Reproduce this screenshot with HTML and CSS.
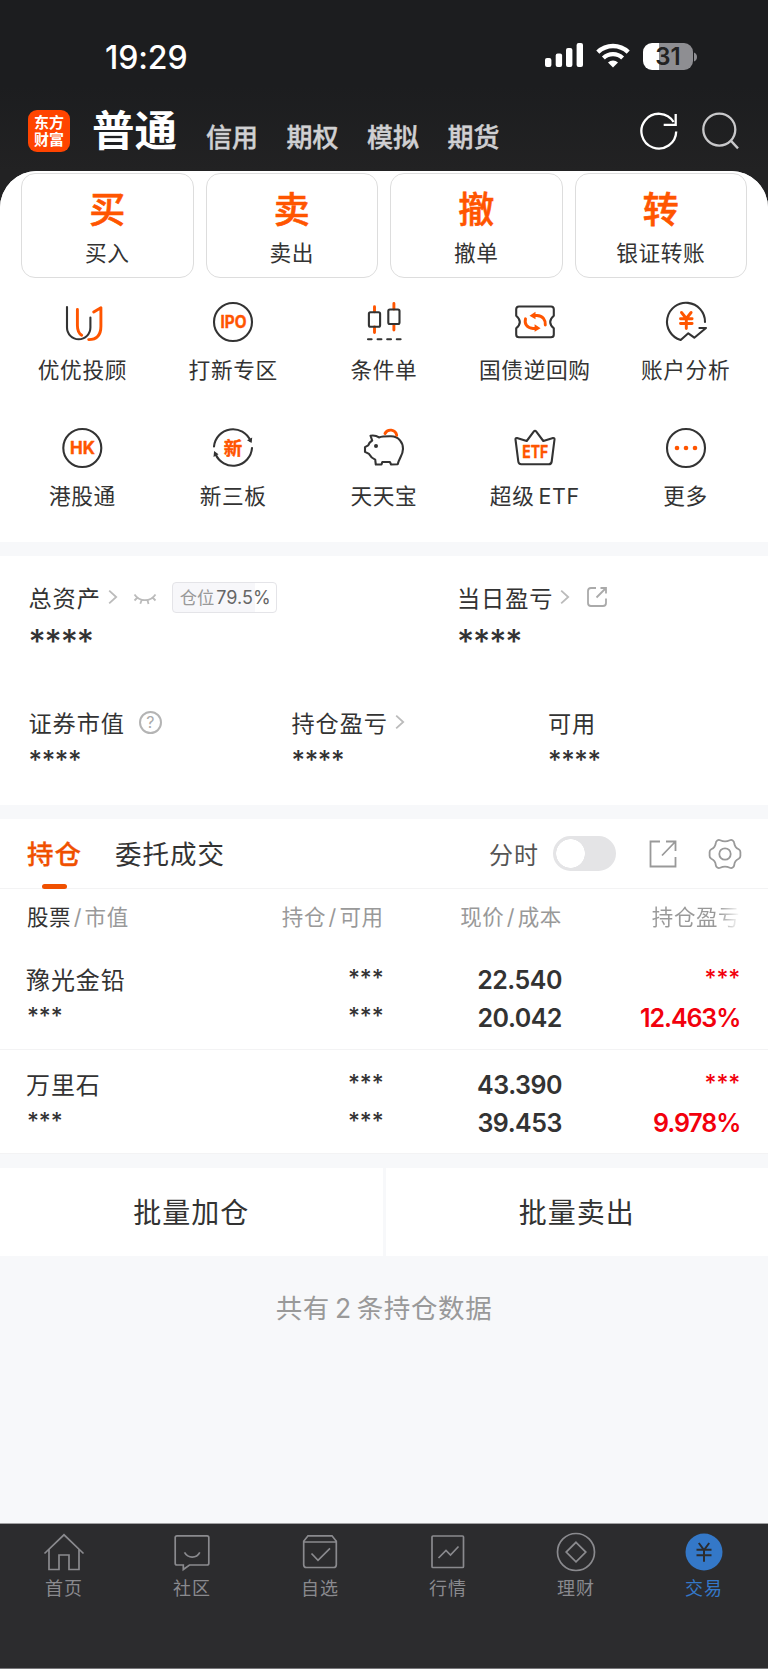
FILE: index.html
```html
<!DOCTYPE html>
<html lang="zh-CN">
<head>
    <meta charset="UTF-8">
    <meta name="viewport" content="width=device-width, initial-scale=1.0">
    <title>交易</title>
    <link rel="stylesheet" href="styles.css">
</head>
<body>
    <header class="header">
        <div class="status-bar">
            <span class="time">19:29</span>
            <div class="status-icons">
                <svg class="signal" width="39" height="24" viewBox="0 0 39 24" fill="#fff">
                    <rect x="0" y="15" width="6.4" height="9" rx="2"/>
                    <rect x="10.7" y="10.5" width="6.4" height="13.5" rx="2"/>
                    <rect x="21" y="5" width="6.4" height="19" rx="2"/>
                    <rect x="31.6" y="0" width="6.4" height="24" rx="2"/>
                </svg>
                <svg class="wifi" width="34" height="25" viewBox="0 0 34 25" fill="none" stroke="#fff">
                    <path d="M1.8 9.2a21.8 21.8 0 0 1 30.4 0" stroke-width="4.4"/>
                    <path d="M7.4 15a13.7 13.7 0 0 1 19.2 0" stroke-width="4.2"/>
                    <path d="M17 24.6l-5-5a7.2 7.2 0 0 1 10 0z" fill="#fff" stroke="none"/>
                </svg>
                <div class="battery">31</div>
                <svg width="5" height="28" viewBox="0 0 5 28"><path d="M1 9.5c4 1 4 8 0 9z" fill="#8e8e92"/></svg>
            </div>
        </div>
        <div class="nav">
            <div class="logo"><span>东方</span><span>财富</span></div>
            <a class="nav-item active">普通</a>
            <a class="nav-item">信用</a>
            <a class="nav-item">期权</a>
            <a class="nav-item">模拟</a>
            <a class="nav-item">期货</a>
            <svg class="refresh" width="40" height="40" viewBox="0 0 40 40" fill="none" stroke="#fff" stroke-width="2.3">
                <path d="M37.2 20.5A17.4 17.4 0 1 1 34.6 11"/>
                <path d="M36.7 3v10.900h-12"/>
            </svg>
            <svg class="search" width="40" height="40" viewBox="0 0 40 40" fill="none" stroke="#c8c8ca" stroke-width="2.3">
                <circle cx="18.3" cy="18.6" r="16"/>
                <path d="M29.8 29.600l7.2 7.800"/>
            </svg>
        </div>
    </header>

    <main class="sheet">
        <!-- Trade buttons -->
        <div class="trade">
            <div class="trade-btn"><b>买</b><span>买入</span></div>
            <div class="trade-btn"><b>卖</b><span>卖出</span></div>
            <div class="trade-btn"><b>撤</b><span>撤单</span></div>
            <div class="trade-btn"><b>转</b><span>银证转账</span></div>
        </div>

        <!-- Tools -->
        <div class="tools">
            <div class="tool">
                <svg class="icon" viewBox="0 0 44 44">
                    <path d="M7 7v20.600a11.700 11.700 0 0 0 23.400 0V17.500"/>
                    <path class="hot" d="M17.400 9.500v16q0 7 4.300 9.800M33.700 12l7.200-4.300v18.500q0 13.300-12.200 13.400"/>
                </svg>
                <span>优优投顾</span>
            </div>
            <div class="tool">
                <svg class="icon" viewBox="0 0 44 44">
                    <circle cx="22" cy="22" r="19"/>
                    <text x="22.5" y="28" font-size="17" textLength="26" lengthAdjust="spacingAndGlyphs">IPO</text>
                </svg>
                <span>打新专区</span>
            </div>
            <div class="tool">
                <svg class="icon" viewBox="0 0 44 44">
                    <path class="hot" d="M12.500 6.800v5M12.500 27v5.600M31.900 3.500v5.500M31.900 24.500v5.500"/>
                    <rect x="6.9" y="12.2" width="11.2" height="14.5" rx="1.5"/>
                    <rect x="26.3" y="9.5" width="11.2" height="14.5" rx="1.5"/>
                    <path d="M6 39.300h3.600M15.600 39.300h3.800M25.200 39.300h3.800M34.800 39.300h3.800"/>
                </svg>
                <span>条件单</span>
            </div>
            <div class="tool">
                <svg class="icon" viewBox="0 0 44 44">
                    <path d="M6 6.500h32q2.800 0 2.800 2.800v6.400q-3.600 3-3.600 6.300t3.600 6.300v6.200q0 2.800-2.800 2.800h-32q-2.800 0-2.800-2.800v-6.200q3.600-3 3.600-6.300t-3.600-6.300v-6.400q0-2.800 2.800-2.800z"/>
                    <path class="hot" d="M22 15.500h2c6 .3 8.500 4.500 8.300 9.500M22 28.500h-2c-6-.3-8.800-4.500-7.500-9.700"/>
                    <path class="hot-fill" d="M16.500 15.700l6-4v7.500zM27.600 28.300l-6-4v7.500z"/>
                </svg>
                <span>国债逆回购</span>
            </div>
            <div class="tool">
                <svg class="icon" viewBox="0 0 44 44">
                    <path d="M41 22A19 19 0 1 0 16.700 40l7.600-6.700 6 4.400 11.700-9.700h-6.600"/>
                    <path class="hot" d="M17.500 12.500l4.800 6 4.800-6M16.500 18.800h11.600M16.500 23.500h11.600M22.300 18.500v10"/>
                </svg>
                <span>账户分析</span>
            </div>
            <div class="tool">
                <svg class="icon" viewBox="0 0 44 44">
                    <circle cx="22.3" cy="22" r="19"/>
                    <text x="22.6" y="28" font-size="17.5" textLength="25" lengthAdjust="spacingAndGlyphs">HK</text>
                </svg>
                <span>港股通</span>
            </div>
            <div class="tool">
                <svg class="icon" viewBox="0 0 44 44">
                    <path d="M3 20.500A19 19 0 0 1 39.500 15M41 22A19 19 0 0 1 4.500 28"/>
                    <path class="dark-fill" d="M36 14.300l4.600 2.800.6-5.500zM2.500 31l.6-6 4.400 3.300z"/>
                    <text x="22" y="28.6" font-size="18.5">新</text>
                </svg>
                <span>新三板</span>
            </div>
            <div class="tool">
                <svg class="icon" viewBox="0 0 44 44">
                    <path d="M8.500 9.700q5-.8 8.500 1.700 3.500-1.200 12-1.100c8 0 12 6.700 12 12.400 0 6.300-3.600 9-5.300 15.500l-6.600.3-1.200-2.500h-7.600l-.8 2.500h-5.700l-.6-4.900q-4-1.800-6.200-5.700l-4-2v-4.800l3.200-1.700q1.200-3.200 4-4.900z"/>
                    <path class="hot" d="M23 7.500c2.500-5 10.500-4.500 11.700 1.800"/>
                    <circle class="dark-fill" cx="14" cy="20" r="2"/>
                </svg>
                <span>天天宝</span>
            </div>
            <div class="tool">
                <svg class="icon" viewBox="0 0 44 44">
                    <path d="M4 12l9.700 3 7-9.400q1.300-1.600 2.600 0l7 9.400 9.700-3q1.700-.2 1.500 1.500l-2.800 22q-.3 2.700-3 2.700h-27.400q-2.700 0-3-2.700l-2.800-22q-.2-1.700 1.500-1.500z"/>
                    <text x="22.2" y="32.2" font-size="17.5" textLength="26" lengthAdjust="spacingAndGlyphs">ETF</text>
                </svg>
                <span>超级<i>ETF</i></span>
            </div>
            <div class="tool">
                <svg class="icon" viewBox="0 0 44 44">
                    <circle cx="22" cy="22" r="19"/>
                    <circle class="hot-fill" cx="13" cy="22" r="2.3"/>
                    <circle class="hot-fill" cx="22" cy="22" r="2.3"/>
                    <circle class="hot-fill" cx="31" cy="22" r="2.3"/>
                </svg>
                <span>更多</span>
            </div>
        </div>

        <!-- Assets -->
        <section class="assets">
            <div class="assets-main">
                <div>
                    <div class="label">总资产
                        <svg class="chevron" width="10" height="16" viewBox="0 0 10 16"><path d="M1.200 1.600l7 6.400-7 6.400"/></svg>
                        <svg class="eye" width="24" height="14" viewBox="0 0 24 14"><path d="M1.500 2.500c5 7.500 16 7.500 21 0M4.500 5.500l-3 3M8.700 8l-1.400 3.700M14.500 8.200l1 3.700M19.500 5.500l3 3"/></svg>
                        <span class="ratio"><i>仓位</i>79.5%</span>
                    </div>
                    <div class="stars">****</div>
                </div>
                <div>
                    <div class="label">当日盈亏
                        <svg class="chevron" width="10" height="16" viewBox="0 0 10 16"><path d="M1.200 1.600l7 6.400-7 6.400"/></svg>
                        <svg class="share" width="22" height="22" viewBox="0 0 22 22"><path d="M10 2H5Q2 2 2 5v12q0 3 3 3h12q3 0 3-3v-4.500M10.500 11.500L19.500 2.500M14.500 2h5.500v5.500"/></svg>
                    </div>
                    <div class="stars">****</div>
                </div>
            </div>
            <div class="assets-sub">
                <div>
                    <div class="label">证券市值
                        <span class="help">?</span>
                    </div>
                    <div class="stars">****</div>
                </div>
                <div>
                    <div class="label">持仓盈亏
                        <svg class="chevron" width="10" height="16" viewBox="0 0 10 16"><path d="M1.200 1.600l7 6.400-7 6.400"/></svg>
                    </div>
                    <div class="stars">****</div>
                </div>
                <div>
                    <div class="label">可用</div>
                    <div class="stars">****</div>
                </div>
            </div>
        </section>

        <!-- Positions -->
        <section class="positions">
            <div class="tabs">
                <a class="tab active">持仓</a>
                <a class="tab">委托成交</a>
                <span class="switch-label">分时</span>
                <span class="switch"></span>
                <svg class="export" width="28" height="28" viewBox="0 0 28 28"><path d="M11 1.500H1.500v25h25V17M13 15.500L26 2M17 1.500h9.500V11"/></svg>
                <svg class="gear" width="34" height="34" viewBox="0 0 34 34">
                    <path d="M12.200 3.200q4.800 2.200 9.600 0 1.500-.7 2.900.2 1.400.9 1.500 2.500.4 4.500 4.500 6.400 1.700 1 1.700 2.700v4q0 1.700-1.700 2.700-4.100 1.900-4.500 6.400-.1 1.600-1.500 2.500-1.400.9-2.900.2-4.800-2.200-9.600 0-1.500.7-2.900-.2-1.400-.9-1.500-2.500-.4-4.500-4.500-6.400-1.700-1-1.700-2.700v-4q0-1.700 1.700-2.700 4.100-1.900 4.500-6.400.1-1.600 1.500-2.500 1.400-.9 2.900-.2z"/>
                    <circle cx="17" cy="17" r="5.7"/>
                </svg>
            </div>
            <div class="row head">
                <div><em>股票</em><u>/</u>市值</div>
                <div>持仓<u>/</u>可用</div>
                <div>现价<u>/</u>成本</div>
                <div class="fade">持仓盈亏</div>
            </div>
            <div class="row stock">
                <div><p class="name">豫光金铅</p><p class="mask">***</p></div>
                <div><p class="mask">***</p><p class="mask">***</p></div>
                <div><p>22.540</p><p>20.042</p></div>
                <div class="up"><p class="mask">***</p><p>12.463%</p></div>
            </div>
            <div class="row stock">
                <div><p class="name">万里石</p><p class="mask">***</p></div>
                <div><p class="mask">***</p><p class="mask">***</p></div>
                <div><p>43.390</p><p>39.453</p></div>
                <div class="up"><p class="mask">***</p><p>9.978%</p></div>
            </div>
        </section>

        <div class="batch">
            <div>批量加仓</div>
            <div>批量卖出</div>
        </div>
        <p class="total">共有<span>2</span>条持仓数据</p>
    </main>

    <footer class="tabbar">
        <div class="tabbar-item">
            <svg viewBox="0 0 42 42"><path d="M1.500 22.500L21 3.800l19.500 18.700M6 18.500v20h10V24h10v14.500h10v-20"/></svg>
            <span>首页</span>
        </div>
        <div class="tabbar-item">
            <svg viewBox="0 0 42 42"><path d="M6 4.800h30q1.800 0 1.800 1.800v25.600q0 1.800-1.800 1.800H18.500l-6.200 4.500V34H6q-1.800 0-1.800-1.800V6.600Q4.200 4.800 6 4.800zM13.500 21.300c3.500 6.300 12 6.300 15.300 0"/></svg>
            <span>社区</span>
        </div>
        <div class="tabbar-item">
            <svg viewBox="0 0 42 42"><path d="M9 4.800h24l4.300 5.400v23.500q0 2.800-2.800 2.800h-27q-2.800 0-2.800-2.800V10.200zM4.700 11h32.600M12.500 22.500l6.500 6.800 12-12"/></svg>
            <span>自选</span>
        </div>
        <div class="tabbar-item">
            <svg viewBox="0 0 42 42"><rect x="5" y="5" width="31.5" height="31.5" rx="1"/><path d="M11.500 27l7.500-7.500 4.500 4.500 8-8.500"/></svg>
            <span>行情</span>
        </div>
        <div class="tabbar-item">
            <svg viewBox="0 0 42 42"><circle cx="21" cy="21" r="18.5"/><path d="M21 11.300l9.800 9.800-9.800 9.800-9.800-9.800z"/></svg>
            <span>理财</span>
        </div>
        <div class="tabbar-item active">
            <svg viewBox="0 0 42 42"><circle class="coin" cx="21" cy="21" r="18.5"/><path d="M15.800 12l5.200 7 5.200-7M13.500 18.800h15M13.500 24.300h15M21 18.800v12"/></svg>
            <span>交易</span>
        </div>
    </footer>
</body>
</html>
```
FILE: styles.css
```css
* {
    box-sizing: border-box;
}
body {
    display: flex;
    flex-direction: column;
    height: 1669px;
    margin: 0;
    background-color: #222223;
    color: #333;
    font-family: Inter, "Noto Sans CJK SC", sans-serif;
}
p {
    margin: 0;
}
svg {
    display: block;
    flex: none;
}

/* Header */
.header {
    height: 171px;
    background: linear-gradient(#1c1d1f 50%, #222223);
}
.status-bar {
    display: flex;
    justify-content: space-between;
    height: 94px;
    padding: 43px 70px 0 105px;
}
.time {
    color: #fff;
    font-size: 32px;
    font-weight: 550;
    line-height: 29px;
    letter-spacing: -0.1px;
}
.status-icons {
    display: flex;
    height: 28px;
}
.wifi {
    margin: 0 13px 0 12px;
}
.battery {
    width: 50px;
    height: 27px;
    border-radius: 9px;
    background: linear-gradient(90deg, #fff 15.5px, #8e8e92 15.5px);
    color: #222;
    font-size: 24px;
    font-weight: 600;
    line-height: 27px;
    text-align: center;
}
.nav {
    display: flex;
    align-items: center;
    height: 74px;
    padding-left: 28px;
}
.logo {
    display: flex;
    flex-direction: column;
    justify-content: center;
    width: 42px;
    height: 42px;
    margin-right: 22px;
    border-radius: 9px;
    background-color: #ff4400;
    color: #fff;
    font-size: 15px;
    font-weight: bold;
    line-height: 17px;
    text-align: center;
}
.nav-item {
    margin-right: 28.5px;
    padding-top: 14px;
    color: #d0d0d2;
    font-size: 26px;
    font-weight: 500;
    line-height: 30px;
    -webkit-text-stroke: 0.4px;
}
.nav-item.active {
    margin-right: 29px;
    padding: 0;
    color: #fff;
    font-size: 42.5px;
    font-weight: bold;
    line-height: 50px;
    -webkit-text-stroke: 0;
}
.refresh {
    margin: 0 22px 0 auto;
}
.search {
    margin-right: 27px;
}

/* White sheet */
.sheet {
    flex: 1;
    overflow: hidden;
    border-radius: 37px 37px 0 0;
    background-color: #f7f8fa;
}
.trade {
    display: grid;
    grid-template-columns: repeat(4, 1fr);
    gap: 12px;
    padding: 2px 21px 0;
    background-color: #fff;
}
.trade-btn {
    display: flex;
    flex-direction: column;
    align-items: center;
    height: 105px;
    border: 1.5px solid #ddd;
    border-radius: 14px;
}
.trade-btn b {
    margin-top: 15px;
    color: #ff5500;
    font-size: 36px;
    font-weight: 500;
    line-height: 42px;
    -webkit-text-stroke: 0.6px;
}
.trade-btn span,
.tool span {
    font-size: 21.7px;
    letter-spacing: 0.6px;
    line-height: 30px;
}
.trade-btn span {
    margin-top: 7px;
}
.tools {
    display: grid;
    grid-template-columns: repeat(5, 1fr);
    grid-auto-rows: 125.7px;
    height: 264px;
    padding: 22px 7px 0;
    background-color: #fff;
}
.tool {
    display: flex;
    flex-direction: column;
    align-items: center;
}
.tool span {
    margin-top: 11px;
}
.tool i {
    margin-left: 4px;
    font-size: 21.5px;
    font-style: normal;
}
.icon {
    width: 44px;
    height: 44px;
    fill: none;
    stroke: #333;
    stroke-width: 2.1;
    stroke-linecap: round;
    stroke-linejoin: round;
}
.icon text {
    fill: #ff5500;
    stroke: #ff5500;
    stroke-width: 0.4;
    font-weight: bold;
    text-anchor: middle;
}
.icon .hot {
    stroke: #ff5500;
    stroke-width: 2.9;
}
.icon .hot-fill {
    fill: #ff5500;
    stroke: none;
}
.icon .dark-fill {
    fill: #333;
    stroke: none;
}

/* Assets */
.assets {
    height: 249px;
    margin-top: 14px;
    padding: 25px 0 0 28.5px;
    background-color: #fff;
}
.assets-main {
    display: grid;
    grid-template-columns: 428.5px 1fr;
}
.assets-sub {
    display: grid;
    grid-template-columns: 263px 256.5px 1fr;
    margin-top: 47px;
}
.label {
    display: flex;
    align-items: center;
    height: 32px;
    font-size: 23.2px;
    letter-spacing: 0.9px;
}
.chevron,
.eye,
.share,
.export,
.gear {
    fill: none;
    stroke: #bbb;
    stroke-width: 1.8;
}
.chevron {
    margin-left: 7px;
}
.eye {
    margin: 4px 0 0 15px;
}
.share {
    margin-left: 16px;
    stroke: #aaa;
}
.ratio {
    height: 31px;
    margin: 1px 0 0 15px;
    padding: 0 5px 0 7px;
    border: 1px solid #e4e4e8;
    border-radius: 4px;
    background: linear-gradient(90deg, #f7f7fa 79.5%, #fff 79.5%);
    color: #666;
    font-size: 18px;
    letter-spacing: 0;
    line-height: 30px;
}
.ratio i {
    margin-right: 2px;
    color: #999;
    font-size: 17.3px;
    font-style: normal;
}
.help {
    width: 23px;
    height: 23px;
    margin-left: 14px;
    border: 2px solid #b4b4b4;
    border-radius: 50%;
    color: #aaa;
    font-size: 16px;
    letter-spacing: 0;
    line-height: 19px;
    text-align: center;
}
.stars {
    height: 34px;
    margin-top: 12px;
    font-size: 33px;
    font-weight: 500;
    letter-spacing: -1.1px;
    line-height: 33px;
}
.assets-sub .stars {
    margin-top: 4px;
    font-size: 26px;
    letter-spacing: -0.4px;
    line-height: 36px;
}

/* Positions */
.positions {
    margin-top: 14px;
    background-color: #fff;
}
.tabs {
    display: flex;
    align-items: center;
    height: 70px;
    padding: 0 28px 0 27px;
    border-bottom: 1px solid #f3f3f4;
}
.tab {
    margin-right: 33px;
    font-size: 26.5px;
    line-height: 70px;
    letter-spacing: 1px;
}
.tab.active {
    position: relative;
    color: #f05000;
    font-weight: 500;
    -webkit-text-stroke: 0.3px;
}
.tab.active::after {
    content: "";
    position: absolute;
    bottom: 0;
    left: 15px;
    width: 25px;
    height: 5px;
    border-radius: 3px;
    background-color: #f05000;
}
.switch-label {
    margin-left: auto;
    color: #555;
    font-size: 24px;
    letter-spacing: 1px;
}
.switch {
    width: 63px;
    height: 35px;
    margin: 0 33px 0 14px;
    border: 3px solid #e4e4e6;
    border-radius: 18px;
    background: radial-gradient(circle at 14.5px 14.5px, #fff 14px, #e4e4e6 14.5px);
}
.export,
.gear {
    stroke: #999;
}
.gear {
    margin: 0 -2px 0 31px;
}
.row {
    display: grid;
    grid-template-columns: repeat(4, 178.3px);
    padding-left: 27px;
    text-align: right;
}
.row > :first-child {
    text-align: left;
}
.head {
    height: 56px;
    color: #999;
    font-size: 21.5px;
    letter-spacing: 0.6px;
    line-height: 56px;
}
.head em {
    color: #333;
    font-style: normal;
}
.head u {
    margin: 0 2.5px;
    text-decoration: none;
}
.fade {
    background: linear-gradient(90deg, #999 88%, #fff);
    background-clip: text;
    color: transparent;
}
.stock {
    height: 104.5px;
    padding-top: 16px;
    border-bottom: 1px solid #f3f3f4;
    font-size: 25px;
    font-weight: 600;
    letter-spacing: -0.5px;
    line-height: 38px;
}
.name {
    margin-left: -1px;
    padding-top: 1px;
    font-size: 24px;
    font-weight: 400;
    letter-spacing: 0.9px;
    line-height: 37px;
}
.mask {
    height: 38px;
    font-size: 23px;
    font-weight: 500;
    letter-spacing: -0.1px;
    line-height: 35px;
}
.up {
    color: #f2000c;
}
.up p:last-child {
    letter-spacing: -1.1px;
}

/* Batch buttons */
.batch {
    display: grid;
    grid-template-columns: 1fr 1fr;
    gap: 3px;
    margin-top: 14px;
    font-size: 28px;
    letter-spacing: 1px;
    line-height: 86px;
    text-align: center;
}
.batch div {
    padding-top: 2px;
    background-color: #fff;
}
.total {
    margin-top: 32px;
    color: #999;
    font-size: 26.5px;
    letter-spacing: 0.6px;
    line-height: 40px;
    text-align: center;
}
.total span {
    margin: 0 5px;
}

/* Tab bar */
.tabbar {
    display: grid;
    grid-template-columns: repeat(6, 1fr);
    height: 146px;
    padding-top: 7px;
    border-top: 1px solid #a0a0a2;
    border-bottom: 1px solid #77777a;
    background-color: #2c2c2e;
    color: #8a8a8e;
    font-size: 18px;
    letter-spacing: 1px;
    line-height: 24px;
}
.tabbar-item {
    display: flex;
    flex-direction: column;
    align-items: center;
}
.tabbar-item svg {
    width: 42px;
    height: 42px;
    margin-bottom: 4px;
    fill: none;
    stroke: #8a8a8e;
    stroke-width: 1.7;
}
.tabbar-item.active {
    color: #3478c8;
}
.tabbar-item.active svg {
    stroke: #2c2c2e;
    stroke-width: 2;
}
.tabbar-item .coin {
    fill: #3478c8;
    stroke: none;
}
```
